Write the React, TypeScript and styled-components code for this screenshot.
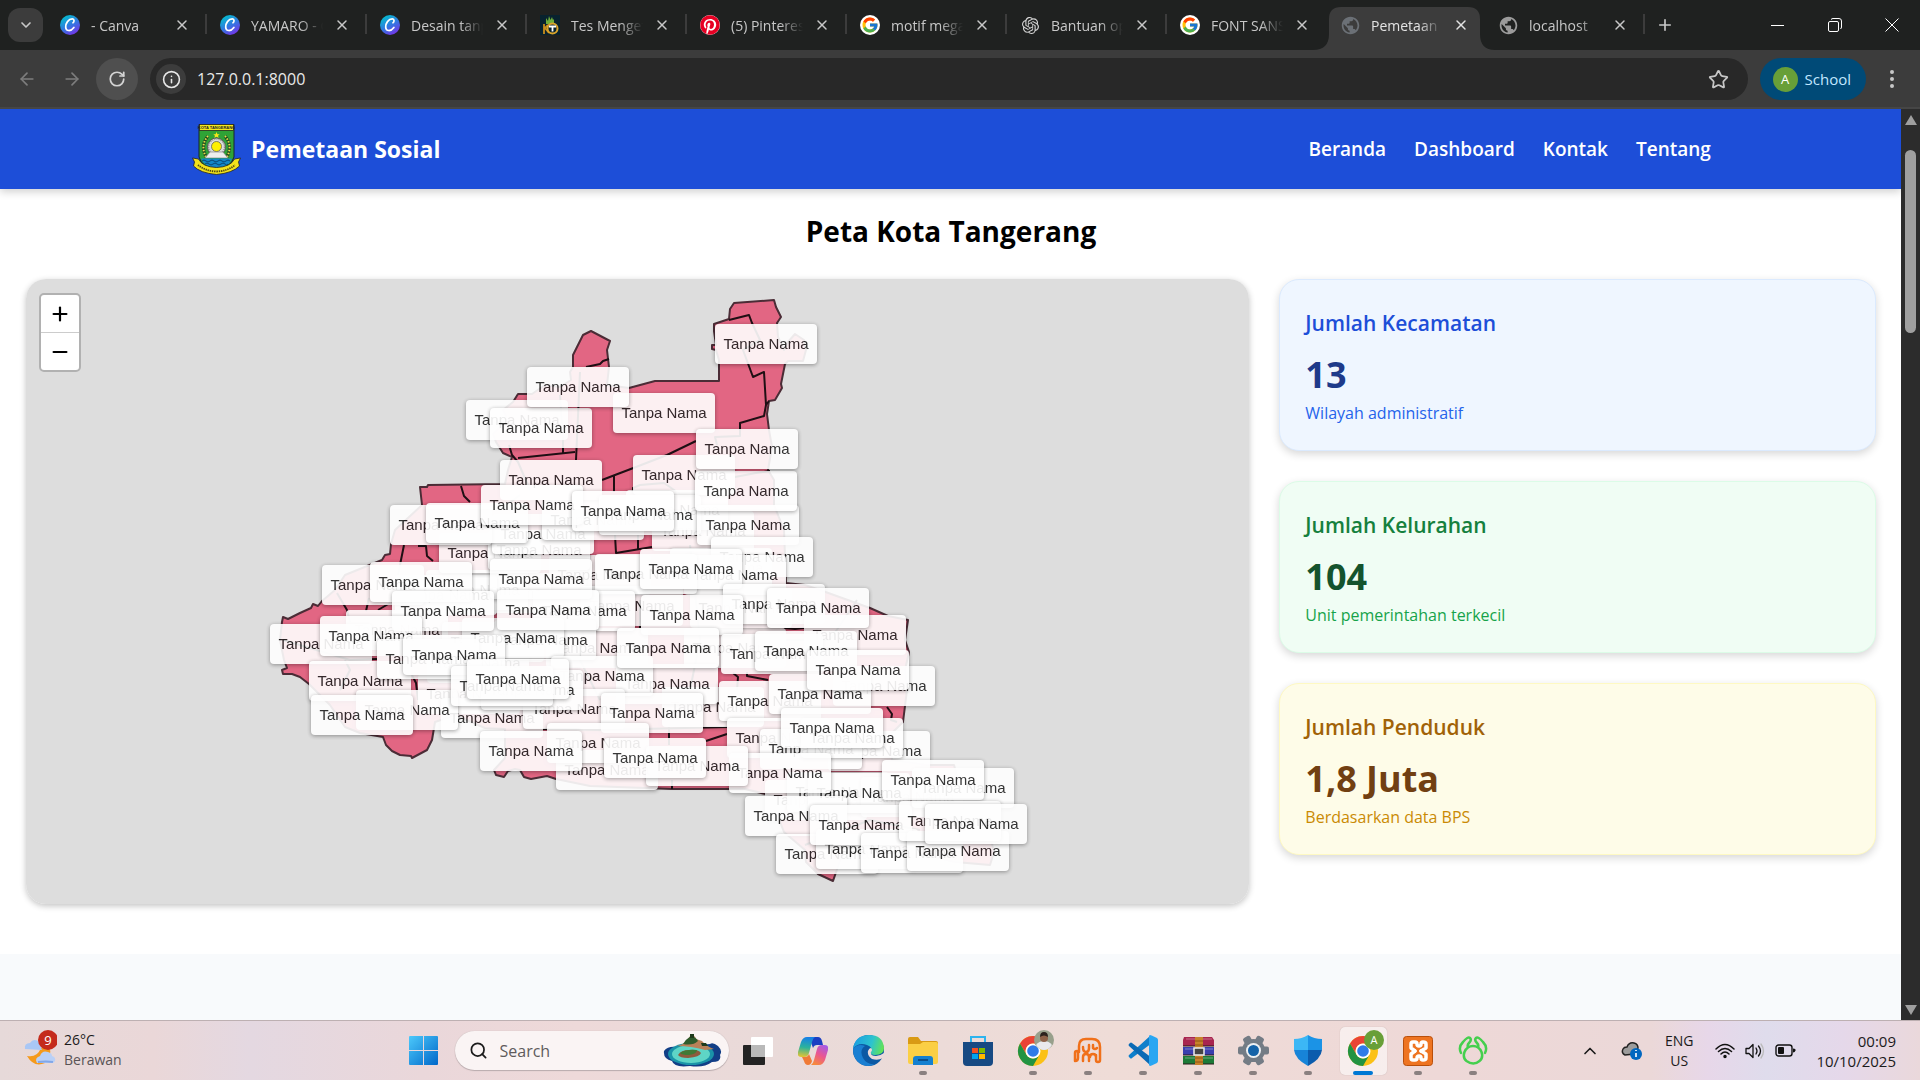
import React from "react";
import styled, { createGlobalStyle, css } from "styled-components";
import {
  ArrowLeft,
  ArrowRight,
  ChevronDown,
  ChevronUp,
  Info,
  Minus,
  MoreVertical,
  Plus,
  RotateCw,
  Search,
  Star,
  X,
} from "lucide-react";
import { FcGoogle } from "react-icons/fc";
import { FaPinterest } from "react-icons/fa";
import { SiOpenai } from "react-icons/si";
import { MdPublic } from "react-icons/md";

const uiFont = `"Open Sans", "Noto Sans", sans-serif`;

const GlobalStyle = createGlobalStyle`
  *, *::before, *::after { box-sizing: border-box; }
  body { margin: 0; font-family: ${uiFont}; overflow: hidden; }
  button { border: 0; padding: 0; margin: 0; background: none; font: inherit; color: inherit; cursor: pointer; }
  input { border: 0; padding: 0; margin: 0; background: none; font: inherit; color: inherit; outline: 0; min-width: 0; }
  a { color: inherit; text-decoration: none; }
  h1, h2, p { margin: 0; }
  svg { display: block; flex: none; }
`;

/* ---------- window ---------- */

const Window = styled.div`
  display: flex;
  flex-direction: column;
  width: 100%;
  height: 100vh;
  overflow: hidden;
`;

const TabStrip = styled.header`
  display: flex;
  height: 50px;
  flex: none;
  padding-left: 8px;
  background: #1f2120;
  color: #c8c8c8;
  font-size: 14px;
`;

const TabSearch = styled.button`
  width: 35px;
  height: 34px;
  margin: 8px 3px 8px 0;
  border-radius: 12px;
  background: #3c3c3c;
  display: grid;
  place-items: center;
`;

const TabItem = styled.div<{ $active?: boolean; $divider?: boolean }>`
  position: relative;
  display: flex;
  align-items: center;
  width: ${(p) => (p.$active ? 158 : 160)}px;
  height: 50px;
  padding: 0 14px;
  gap: 11px;
  ${(p) =>
    p.$divider &&
    css`
      &::after {
        content: "";
        position: absolute;
        right: -1px;
        top: 14px;
        width: 2px;
        height: 20px;
        background: #3c3c3c;
      }
    `}
  ${(p) =>
    p.$active &&
    css`
      color: #e3e3e3;
      z-index: 1;
    `}
`;

const ActiveShape = styled.svg`
  position: absolute;
  left: -13px;
  top: 7px;
  z-index: -1;
`;

const TabTitle = styled.button`
  width: 72px;
  height: 30px;
  overflow: hidden;
  white-space: nowrap;
  text-align: left;
  mask-image: linear-gradient(90deg, #000 68%, transparent 100%);
`;

const Favicon = styled.span`
  width: 20px;
  height: 20px;
  display: grid;
  place-items: center;
  flex: none;
`;

const WhiteDisc = styled(Favicon)`
  border-radius: 50%;
  background: #fff;
`;

const CloseTab = styled.button`
  width: 18px;
  height: 18px;
  margin-left: -1px;
  display: grid;
  place-items: center;
  flex: none;
`;

const NewTab = styled.button`
  width: 42px;
  display: grid;
  place-items: center;
`;

const WindowButtons = styled.div`
  display: flex;
  margin-left: auto;
  color: #fff;
`;

const WindowButton = styled.button`
  width: 57px;
  height: 50px;
  display: grid;
  place-items: center;
`;

const Toolbar = styled.div`
  display: flex;
  align-items: center;
  height: 59px;
  flex: none;
  padding: 1px 16px 0 6px;
  background: #3c3c3c;
  border-bottom: 2px solid #464646;
  color: #c7c7c7;
`;

const ToolButton = styled.button<{ $round?: boolean; $dim?: boolean }>`
  width: 42px;
  height: 42px;
  margin-right: 3px;
  border-radius: 50%;
  display: grid;
  place-items: center;
  color: ${(p) => (p.$dim ? "#7d7d7d" : "#d4d4d4")};
  background: ${(p) => (p.$round ? "#4f4f4f" : "transparent")};
`;

const AddressBar = styled.div`
  display: flex;
  align-items: center;
  flex: 1;
  height: 42px;
  margin-left: 9px;
  padding: 0 19px 0 6px;
  border-radius: 21px;
  background: #282828;
  color: #e8e8e8;
  font-size: 16px;
`;

const SiteInfo = styled.button`
  width: 30px;
  height: 30px;
  border-radius: 50%;
  background: #3c3c3c;
  display: grid;
  place-items: center;
  margin-right: 11px;
`;

const AddressInput = styled.input`
  flex: 1;
`;

const Profile = styled.button`
  display: flex;
  align-items: center;
  gap: 7px;
  height: 42px;
  margin: 0 14px 0 12px;
  padding: 0 15px 0 13px;
  border-radius: 21px;
  background: #004a77;
  color: #c2e7ff;
  font-size: 15px;
`;

const Avatar = styled.span`
  width: 25px;
  height: 25px;
  border-radius: 50%;
  background: #689f38;
  color: #fff;
  font-size: 13px;
  line-height: 25px;
  text-align: center;
`;

/* ---------- page ---------- */

const Viewport = styled.div`
  display: flex;
  flex: 1;
  min-height: 0;
`;

const Page = styled.div`
  flex: 1;
  min-width: 0;
  overflow: hidden;
  background: #f8fafc;
`;

const SiteHeader = styled.header`
  position: relative;
  height: 80px;
  background: #1d4ed8;
  color: #fff;
  box-shadow: 0 3px 8px rgba(0, 0, 0, 0.18);
`;

const HeaderInner = styled.div`
  display: flex;
  align-items: center;
  justify-content: space-between;
  width: 80%;
  height: 100%;
  margin: 0 auto;
  padding-left: 2px;
`;

const Brand = styled.a`
  display: flex;
  align-items: center;
  gap: 10px;
  font-size: 23px;
  font-weight: 700;
`;

const Nav = styled.nav`
  display: flex;
  gap: 28px;
  font-size: 19px;
  font-weight: 600;
`;

const Section = styled.main`
  background: #fff;
  padding: 20px 25px 50px 26px;
`;

const Heading = styled.h1`
  font-size: 28px;
  line-height: 45px;
  font-weight: 700;
  text-align: center;
  color: #000;
  margin-bottom: 25px;
`;

const Columns = styled.div`
  display: grid;
  grid-template-columns: repeat(3, 1fr);
  gap: 30px;
`;

const MapPanel = styled.section`
  position: relative;
  height: 625px;
  overflow: hidden;
  border-radius: 20px;
  background: #ddd;
`;

const MapFrame = styled.div`
  grid-column: span 2;
  border-radius: 20px;
  box-shadow: 0 2px 6px rgba(0, 0, 0, 0.24);
`;

const Regions = styled.svg`
  position: absolute;
  left: 0;
  top: 0;
`;

const Tooltip = styled.span<{ $x: number; $y: number }>`
  position: absolute;
  left: ${(p) => p.$x}px;
  top: ${(p) => p.$y}px;
  width: 102px;
  height: 40px;
  border-radius: 4px;
  background: #fff;
  box-shadow: 0 1px 4px rgba(0, 0, 0, 0.4);
  color: #222;
  font: 15px/40px "Liberation Sans", Arial, sans-serif;
  text-align: center;
  white-space: nowrap;
  opacity: 0.9;
`;

const ZoomControl = styled.div`
  position: absolute;
  left: 13px;
  top: 14px;
  width: 42px;
  border: 2px solid #b1b1b1;
  border-radius: 5px;
  background: #fff;
  overflow: hidden;
`;

const ZoomButton = styled.button`
  width: 100%;
  height: 37px;
  display: grid;
  place-items: center;
  color: #000;
  & + & {
    height: 38px;
    border-top: 1px solid #ccc;
  }
`;

const Stats = styled.aside`
  display: flex;
  flex-direction: column;
  gap: 30px;
`;

type Tone = { bg: string; edge: string; title: string; value: string; note: string };

const StatCard = styled.article<{ $tone: Tone }>`
  padding: 25px 25px 23px;
  border: 1px solid ${(p) => p.$tone.edge};
  border-radius: 20px;
  background: ${(p) => p.$tone.bg};
  color: ${(p) => p.$tone.note};
  box-shadow: 0 3px 8px rgba(0, 0, 0, 0.16);
`;

const StatTitle = styled.h2<{ $color: string }>`
  font-size: 21px;
  line-height: 37px;
  font-weight: 600;
  color: ${(p) => p.$color};
`;

const StatValue = styled.p<{ $color: string }>`
  margin-top: 8px;
  font-size: 36px;
  line-height: 50px;
  font-weight: 700;
  color: ${(p) => p.$color};
`;

const StatNote = styled.p`
  font-size: 16px;
  line-height: 27px;
`;

const ScrollTrack = styled.div`
  display: flex;
  flex-direction: column;
  align-items: center;
  width: 19px;
  flex: none;
  padding: 6px 0 5px;
  background: #2c2c2c;
`;

const ScrollThumb = styled.div`
  width: 11px;
  height: 183px;
  margin: 25px 0 auto;
  border-radius: 6px;
  background: #9f9f9f;
`;

/* ---------- taskbar ---------- */

const Taskbar = styled.footer`
  display: grid;
  grid-template-columns: 1fr auto 1fr;
  align-items: center;
  height: 60px;
  flex: none;
  border-top: 1px solid #bdb0b2;
  background: linear-gradient(90deg, #e6d9d9 0%, #ead7d8 8%, #e4d8e1 13%, #ead7da 22%, #eed9d9 30%, #e9dad9 40%, #efdcd7 58%, #eed8d7 75%, #ebd8d8 86%, #e7d7e9 89%, #dfdcec 92%, #e5d8ea 96%, #ead8db 100%);
  color: #1b1b1b;
  font-size: 14px;
`;

const Weather = styled.button`
  display: flex;
  gap: 7px;
  padding-left: 24px;
  text-align: left;
  line-height: 20px;
  color: #5a5456;
`;

const Temperature = styled.span`
  display: block;
  color: #1b1b1b;
`;

const AppRow = styled.div`
  display: flex;
  align-items: center;
  padding-right: 24px;
`;

const AppButton = styled.button<{ $running?: boolean; $active?: boolean }>`
  position: relative;
  width: 47px;
  height: 48px;
  margin: 0 4px;
  display: grid;
  place-items: center;
  border-radius: 5px;
  ${(p) => p.$active && "background: rgba(255,255,255,.55); box-shadow: 0 0 1px rgba(0,0,0,.25);"}
  ${(p) =>
    p.$running &&
    css`
      &::after {
        content: "";
        position: absolute;
        bottom: 0;
        left: 50%;
        width: ${p.$active ? 20 : 8}px;
        height: 4px;
        transform: translateX(-50%);
        border-radius: 2px;
        background: ${p.$active ? "#0078d4" : "#8a8080"};
      }
    `}
`;

const SearchBox = styled.label`
  display: flex;
  align-items: center;
  gap: 12px;
  width: 274px;
  height: 39px;
  margin: 0 2px 0 4px;
  padding: 0 7px 0 14px;
  border-radius: 20px;
  background: #faf4f4;
  box-shadow: 0 1px 1px #b9abad, 0 0 1px #b9abad;
  font-size: 16px;
  & input {
    flex: 1;
  }
  & input::placeholder {
    color: #5f5b5c;
    opacity: 1;
  }
`;

const Tray = styled.div`
  display: flex;
  align-items: center;
  justify-content: flex-end;
  padding-right: 24px;
`;

const TrayButton = styled.button<{ $gap: number }>`
  margin-right: ${(p) => p.$gap}px;
  line-height: 20px;
  text-align: center;
`;

const Clock = styled.time`
  font-size: 15px;
  text-align: right;
  line-height: 20px;
`;

/* ---------- drawings ---------- */

const CanvaIcon = () => (
  <svg width="20" height="20" viewBox="0 0 20 20">
    <defs>
      <linearGradient id="canva" x1="0.2" y1="0" x2="0.8" y2="1">
        <stop offset="0" stopColor="#00c4cc" />
        <stop offset="0.5" stopColor="#2f7ae0" />
        <stop offset="1" stopColor="#7d2ae8" />
      </linearGradient>
    </defs>
    <circle cx="10" cy="10" r="10" fill="url(#canva)" />
    <path d="M13 7.800c1.400-.8 1.500-3.800-.6-3.900C8.500 3.800 5.400 8.500 5.700 12.200c.3 4.300 5 4.500 8.200.2" fill="none" stroke="#fff" strokeWidth="1.700" strokeLinecap="round" />
  </svg>
);

const SchoolIcon = () => (
  <svg width="20" height="20" viewBox="0 0 20 20">
    <rect width="20" height="20" fill="#08222e" />
    <path d="M6 9 6 3l2 3 1-5 1.500 4 1.500-3 1 3 1-1v5z" fill="#6fae3a" />
    <path d="M4 9v10M4 14l4-4M5 13l4 5" stroke="#c98d1c" strokeWidth="1.800" />
    <circle cx="12.500" cy="13.500" r="5" fill="none" stroke="#d9a32a" strokeWidth="2" />
    <path d="M9 11.500h7M12.500 11.500v5" stroke="#fff" strokeWidth="1.800" />
  </svg>
);

const CrestIcon = () => (
  <svg width="49" height="51" viewBox="0 0 49 51">
    <path d="M7 .5h35V33q-3 11-17.500 12Q10 44 7 33z" fill="#2fa336" stroke="#17242b" />
    <rect x="7.500" y=".5" width="34" height="6" fill="#f6e71d" stroke="#222" strokeWidth=".8" />
    <text x="24.500" y="5.200" fontSize="4" fontWeight="700" textAnchor="middle" fontFamily="Liberation Sans" fill="#222">KOTA TANGERANG</text>
    <path d="m24.500 8 1 2.200h2.200l-1.700 1.500.7 2.300-2.200-1.300-2.200 1.300.7-2.300-1.700-1.500h2.200z" fill="#f6e71d" />
    <path d="M16 12q-8 9-2 21M33 12q8 9 2 21" fill="none" stroke="#1d4d20" strokeWidth="3" />
    <path d="M16 12q-8 9-2 21M33 12q8 9 2 21" fill="none" stroke="#e8dc4a" strokeWidth="2" strokeDasharray="1.500 1.500" />
    <circle cx="24.500" cy="23" r="9" fill="#dcdcdc" stroke="#555" strokeWidth="1" />
    <circle cx="24.500" cy="23" r="8" fill="none" stroke="#888" strokeWidth="1.500" strokeDasharray="1 1.200" />
    <circle cx="24.500" cy="22.500" r="5" fill="#fff000" stroke="#665" strokeWidth=".8" />
    <path d="m13 34 5-6h13l5 6z" fill="#eee" stroke="#777" strokeWidth=".6" />
    <path d="M9 34.500h31q-3 9-15.500 10Q12 43 9 34.500z" fill="#1387c8" />
    <path d="M10 37q2-2 4 0t4 0 4 0 4 0 4 0 4 0 4 0M13 40q2-2 4 0t4 0 4 0 4 0 4 0 3 0" fill="none" stroke="#0a3f6b" strokeWidth=".9" />
    <path d="m.5 34 6 1q4 8 18 8.500 14-.5 18-8.500l6-1-2 4 1 4q-7 7-23 8.500Q8 49 1.500 42l1-4z" fill="#f2e21b" stroke="#222" strokeWidth=".8" />
    <path d="M6 41q7 6 18.500 6.500Q36 47 43 41" fill="none" stroke="#514a10" strokeWidth="1.800" strokeDasharray="1.400 .8" />
  </svg>
);

const WeatherIcon = () => (
  <svg width="33" height="42" viewBox="0 0 33 42">
    <path d="M3 26q10 2 14-8l8-2q4 10-4 17-11 5-18-7z" fill="#f59a1c" />
    <path d="M1 19q-1-6 5-6 3-5 8-2l4 9z" fill="#a9c7f5" />
    <path d="M13 33q-3-5 3-7 2-6 8-4 4 1 4 4 4 1 3 5-1 2-3 2z" fill="#b9d0f7" />
    <path d="M14 32q8-1 15 0" stroke="#82a7e8" strokeWidth="2" fill="none" />
    <circle cx="24" cy="10" r="10" fill="#c42b1c" />
    <text x="24" y="15" fontSize="13" fill="#fff" textAnchor="middle" fontFamily="Open Sans">9</text>
  </svg>
);

const StartIcon = () => (
  <svg width="29" height="29" viewBox="0 0 29 29">
    <defs>
      <linearGradient id="start" x1="0" y1="0" x2="1" y2="1">
        <stop offset="0" stopColor="#4cc9fb" />
        <stop offset="1" stopColor="#0067c9" />
      </linearGradient>
    </defs>
    <path d="M0 1q0-1 1-1h13v14H0zM15 0h13q1 0 1 1v13H15zM0 15h14v14H1q-1 0-1-1zM15 15h14v13q0 1-1 1H15z" fill="url(#start)" />
  </svg>
);

const IslandIcon = () => (
  <svg width="60" height="36" viewBox="0 -1 60 36">
    <path d="M2 17q4-5 12-4l34-3q3-2 8 2 5 5 2 9 2 7-8 7-8 6-22 4-16 2-18-5-9-2-8-10z" fill="#123e86" />
    <ellipse cx="29" cy="20" rx="23" ry="11" fill="#1a93a8" />
    <ellipse cx="29" cy="20" rx="19" ry="9" fill="#5ed5c6" />
    <path d="M15 12q8-2 10-6l4-5q4 0 5 4l6 2q4 5 12 8l-9 1q-14-4-28-4z" fill="#b98058" />
    <path d="M21 10q3-5 8-8 5 1 7 5-5 5-15 3z" fill="#2f5b2c" />
    <path d="M28 0h4v4h-4zM39 9h5l2 3h-6z" fill="#1f3a1c" />
    <path d="M16 21q3-5 11-5 9-1 12 3-1 4-13 5-8 0-10-3z" fill="#8d5b3d" />
    <path d="M18 19q6-4 17-3 0 4-8 5-7 0-9-2z" fill="#3f7a35" />
  </svg>
);

const TaskViewIcon = () => (
  <svg width="30" height="30" viewBox="0 0 30 30">
    <rect x="0" y="9" width="22" height="20" rx="1" fill="#232323" />
    <rect x="8" y="1" width="22" height="20" rx="1" fill="#fff" />
    <rect x="8" y="9" width="14" height="12" fill="#b9b9b9" />
  </svg>
);

const CopilotIcon = () => (
  <svg width="30" height="30" viewBox="0 0 30 30">
    <defs>
      <linearGradient id="cop1" x1="0.3" y1="0" x2="0.2" y2="1">
        <stop offset="0" stopColor="#1780e6" />
        <stop offset="0.5" stopColor="#2bb39b" />
        <stop offset="1" stopColor="#e9c52f" />
      </linearGradient>
      <linearGradient id="cop2" x1="0.8" y1="0" x2="0.3" y2="1">
        <stop offset="0" stopColor="#a45be8" />
        <stop offset="0.5" stopColor="#ea5692" />
        <stop offset="1" stopColor="#f7893b" />
      </linearGradient>
    </defs>
    <path d="M11 1h9q3 0 4 4l1 4h-6q-3 0-4 3z" fill="#1b3fc2" />
    <path d="M9 1h8q-2 1-3 5l-3 11q-1 4-5 4H3q-4 0-3-5L3 6q2-5 6-5z" fill="url(#cop1)" />
    <path d="M21 29h-8q2-1 3-5l3-11q1-4 5-4h3q4 0 3 5l-3 10q-2 5-6 5z" fill="url(#cop2)" />
    <path d="M4 21h3q3 0 4-3l3 7q-1 4-4 4-3 0-4-4z" fill="#f07a36" />
  </svg>
);

const EdgeIcon = () => (
  <svg width="31" height="31" viewBox="0 0 31 31">
    <defs>
      <linearGradient id="edge1" x1="0" y1="0.3" x2="1" y2="0.5">
        <stop offset="0" stopColor="#1b9de2" />
        <stop offset="0.6" stopColor="#2dc3ce" />
        <stop offset="1" stopColor="#62e356" />
      </linearGradient>
    </defs>
    <circle cx="15.500" cy="15.500" r="15.500" fill="#0c59a4" />
    <path d="M0 14Q2 0 16 0t15 13q0 7-9 7-5 0-4-3 2-5-4-7Q5 7 0 14z" fill="url(#edge1)" />
    <path d="M0 14q5-6 12-3-6 4-2 12 4 7 12 6Q12 34 4 26 0 21 0 14z" fill="#1a7fd2" />
    <path d="M18 17q-1 4 5 4 4 0 8-3l1 4-2 1q-5 3-11 1-5-3-4-8 1-3 3-3 2 2 0 4z" fill="#ecdad9" />
  </svg>
);

const FolderIcon = () => (
  <svg width="30" height="28" viewBox="0 0 30 28">
    <path d="M0 2q0-2 2-2h8l3 4h15q2 0 2 2v8H0z" fill="#d99a14" />
    <path d="M0 7h12l3-2h13q2 0 2 2v18q0 2-2 2H2q-2 0-2-2z" fill="#fbcf45" />
    <path d="M5 28v-6q0-3 3-3h14q3 0 3 3v6z" fill="#1580d0" />
    <path d="M10 23h10" stroke="#0b4f8c" strokeWidth="2" />
  </svg>
);

const StoreIcon = () => (
  <svg width="30" height="30" viewBox="0 0 30 30">
    <path d="M8 7V1h14v6" fill="none" stroke="#2eb4ee" strokeWidth="2" />
    <path d="M0 6h30v20q0 4-4 4H4q-4 0-4-4z" fill="#174a83" />
    <path d="M9 12h6v5H9z" fill="#f25022" />
    <path d="M16 12h6v5h-6z" fill="#7fba00" />
    <path d="M9 18h6v5H9z" fill="#00a4ef" />
    <path d="M16 18h6v5h-6z" fill="#ffb900" />
  </svg>
);

const ChromeIcon = ({ badge }: { badge: "photo" | "letter" }) => (
  <svg width="38" height="38" viewBox="-3 3 38 38" overflow="visible">
    <circle cx="16" cy="22" r="15" fill="#fbc116" />
    <path d="M3 14.500A15 15 0 0 1 29 14.500H16a7.500 7.500 0 0 0-6.500 11z" fill="#ea4335" />
    <path d="M3 14.500A15 15 0 0 0 16 37l6.500-11.300a7.500 7.500 0 0 1-13 0z" fill="#229342" />
    <circle cx="16" cy="22" r="7.500" fill="#fff" />
    <circle cx="16" cy="22" r="5.800" fill="#2f7be8" />
    {badge === "letter" ? (
      <>
        <circle cx="27" cy="11" r="10" fill="#689f38" />
        <text x="27" y="15" fontSize="11" fill="#fff" textAnchor="middle" fontFamily="Open Sans">A</text>
      </>
    ) : (
      <>
        <circle cx="27" cy="11" r="10" fill="#98a08c" />
        <path d="M19 16q3-4 8-4t8 4q-3 5-8 5t-8-5z" fill="#e9e9ec" />
        <circle cx="27" cy="9" r="4" fill="#8d6148" />
        <path d="M23 8q0-5 4-5t4 5q-4-3-8 0z" fill="#2b211d" />
      </>
    )}
  </svg>
);

const ElephantIcon = () => (
  <svg width="30" height="28" viewBox="0 0 30 28" fill="none" stroke="#f0701a" strokeWidth="2.500" strokeLinecap="round" strokeLinejoin="round">
    <path d="M6 15V9q0-7 7-7h6q8 0 8 8v13q0 2-2 2t-2-2v-5M2 24q3 0 3-3v-5M2 24v-8q0-2 2-2M10 10q0 5 3 5t3-4V8M10 24v-4q0-3 3-3t3 3v4M17 20q0-3 3-3t3 3M20 8v3q2 2 4 0" />
  </svg>
);

const VsCodeIcon = () => (
  <svg width="31" height="31" viewBox="0 0 31 31">
    <path d="m1 20 21-19 2 7L4 23q-1 1-2 0l-1-1q-1-1 0-2z" fill="#0f7fcb" />
    <path d="m1 11 21 19 2-7L4 8Q3 7 2 8L1 9q-1 1 0 2z" fill="#0a6ab5" />
    <path d="M22 0q1 0 7 3 1 1 1 2v21q0 1-1 2-6 3-7 3-1 0-1-2V2q0-2 1-2z" fill="#29a6f2" />
  </svg>
);

const WinRarIcon = () => (
  <svg width="31" height="28" viewBox="0 0 31 28">
    <path d="M1 0h28l2 3v6H0V3z" fill="#a8254f" />
    <path d="M0 10h31v8H0z" fill="#3a3fae" />
    <path d="M0 19h31v8H0z" fill="#1d7a37" />
    <path d="M3 2h26M2 12h28M2 21h28" stroke="#fff" strokeOpacity=".35" strokeWidth="1" />
    <path d="M0 9h31M0 18h31M0 27h31" stroke="#2a1a1a" strokeWidth="1" />
    <rect x="12" width="8" height="28" fill="#c7822a" />
    <path d="M12 4h8M12 8h8M12 21h8M12 25h8" stroke="#8d5414" />
    <rect x="11" y="11" width="10" height="7" fill="#444" stroke="#eee" strokeWidth="1.500" />
  </svg>
);

const GearIcon = () => (
  <svg width="31" height="31" viewBox="0 0 31 31">
    <g fill="#747c85">
      <circle cx="15.500" cy="15.500" r="11.500" />
      {[0, 60, 120, 180, 240, 300].map((a) => (
        <rect key={a} x="11.500" y="0" width="8" height="9" rx="2" transform={`rotate(${a + 30} 15.500 15.500)`} />
      ))}
    </g>
    <circle cx="15.500" cy="15.500" r="7.500" fill="#eef0f2" />
    <circle cx="15.500" cy="15.500" r="5.500" fill="#1463a8" />
  </svg>
);

const ShieldIcon = () => (
  <svg width="28" height="31" viewBox="0 0 28 31">
    <path d="M14 0q6 4 14 4v11H14z" fill="#1b93e6" />
    <path d="M14 0Q8 4 0 4v11h14z" fill="#3cb7f5" />
    <path d="M0 15h14v16Q1 24 0 15z" fill="#1784d8" />
    <path d="M28 15H14v16q13-7 14-16z" fill="#0b5cad" />
  </svg>
);

const XamppIcon = () => (
  <svg width="30" height="30" viewBox="0 0 30 30">
    <rect x=".5" y=".5" width="29" height="29" rx="3" fill="#ee7421" stroke="#b94f0b" />
    <g fill="none" stroke="#fff" strokeWidth="3.500" strokeLinecap="round" strokeLinejoin="round">
      <path d="M12 15 8 12V8q0-2 2-2h2q2 0 2 2t2 2 2-2 2-2q3 0 3 2v4l-5 3" />
      <path d="m12 15-4 3v4q0 2 2 2h2q2 0 2-2t2-2 2 2 2 2q3 0 3-2v-4l-5-3" />
    </g>
  </svg>
);

const NavicatIcon = () => (
  <svg width="30" height="30" viewBox="0 0 30 30" fill="none" stroke="#45cf4e" strokeWidth="2.500" strokeLinecap="round" strokeLinejoin="round">
    <path d="M15 10q6 0 8.500 6 2 6-2 9-6 5-13 0-4-3-2-9Q9 10 15 10z" />
    <path d="M3 17Q0 11 5 6q5-6 7-4t-1 5q-2 2-1 4M27 17q3-6-2-11-5-6-7-4t1 5q2 2 1 4" />
  </svg>
);

const CloudInfoIcon = () => (
  <svg width="22" height="20" viewBox="0 0 22 20">
    <path d="M4 14q-4-2-2-6 1-2 4-2 2-5 7-4 4 1 4 5l-4 6z" fill="#9c9c9c" stroke="#222" strokeWidth="1.500" />
    <circle cx="15" cy="13" r="6" fill="#0067c0" />
    <path d="M15 12v4M15 9v1" stroke="#fff" strokeWidth="1.600" />
  </svg>
);

const WifiIcon = () => (
  <svg width="20" height="16" viewBox="0 0 20 16" fill="none" stroke="#111" strokeWidth="1.500" strokeLinecap="round">
    <path d="M1 6q9-9 18 0M3.500 8.500q6.500-6 13 0M6 11q4-4 8 0" />
    <circle cx="10" cy="13.500" r="1" fill="#111" />
  </svg>
);

const SpeakerIcon = () => (
  <svg width="20" height="16" viewBox="0 0 20 16" fill="none" stroke="#111" strokeWidth="1.300" strokeLinecap="round" strokeLinejoin="round">
    <path d="M1 5.500h3l4-4v13l-4-4H1zM11 5q2 3 0 6M13.500 3q4 5 0 10" />
    <path d="M16 1q5 7 0 14" stroke="#bbb" />
  </svg>
);

const BatteryIcon = () => (
  <svg width="21" height="14" viewBox="0 0 21 14">
    <rect x="1" y="1" width="16" height="11" rx="2.500" fill="none" stroke="#111" strokeWidth="1.400" />
    <rect x="3" y="3" width="6" height="7" rx="1" fill="#111" />
    <path d="M18 4.500q3 0 2.500 2t-2.500 2z" fill="#111" />
  </svg>
);

/* ---------- data ---------- */

const canvaTabs = ["- Canva", "YAMARO - Canva", "Desain tanpa judul"];

const disc = (
  <WhiteDisc>
    <FcGoogle size={18} />
  </WhiteDisc>
);

const tabs = [
  ...canvaTabs.map((title) => ({ title, icon: <CanvaIcon /> })),
  { title: "Tes Mengetik", icon: <SchoolIcon /> },
  { title: "(5) Pinterest", icon: <WhiteDisc><FaPinterest size={20} color="#e60023" /></WhiteDisc> },
  { title: "motif megamendung", icon: disc },
  { title: "Bantuan operasi", icon: <SiOpenai size={17} color="#d6d6d6" /> },
  { title: "FONT SANS", icon: disc },
  { title: "Pemetaan Sosial", icon: <MdPublic size={21} color="#6b7076" />, active: true },
  { title: "localhost", icon: <MdPublic size={21} color="#9b9b9b" /> },
];

const ORIGIN = { x: 26, y: 279 };
const tooltips: [number, number][] = [
  [652, 511], [626, 490], [670, 548], [549, 555], [449, 573], [426, 570], [395, 575], [346, 610],
  [442, 622], [427, 643], [546, 628], [684, 628], [690, 588], [581, 586], [418, 674],
  [765, 780], [787, 772], [861, 777], [439, 533], [488, 530], [492, 514], [390, 505],
  [426, 503], [542, 500], [613, 393], [466, 400], [490, 408], [527, 367], [500, 460],
  [481, 485], [633, 455], [599, 495], [697, 505], [695, 471], [696, 429], [572, 491],
  [715, 324], [711, 537], [684, 555], [595, 554], [640, 549], [533, 591], [490, 559],
  [322, 565], [370, 562], [494, 620], [462, 618], [497, 590], [392, 591],
  [723, 584], [804, 615], [767, 588], [641, 595], [721, 634], [755, 631],
  [833, 666], [662, 687], [616, 664], [551, 656], [617, 628], [719, 681], [769, 674], [807, 650],
  [270, 624], [320, 616], [309, 661], [377, 639], [403, 635],
  [441, 698], [523, 689], [356, 690], [311, 695], [481, 670], [451, 666], [467, 659],
  [601, 693], [556, 750], [547, 723], [480, 731],
  [828, 731], [727, 718], [760, 729], [801, 718], [781, 708],
  [808, 773], [729, 753], [646, 746], [604, 738],
  [745, 796], [776, 834], [816, 829], [810, 805], [861, 833], [907, 831],
  [912, 768], [882, 760], [899, 801], [925, 804],
];

const outline =
  "M734 303 774 300 776 307 781 317 777 323 778 337 784 350 788 342 795 334 804 340 806 350 803 361 788 361 785 364 781 384 782 388 775 400 769 401 767 414 769 430 772 447 768 470 774 480 774 505 784 530 786 583 805 585 820 590 870 608 888 616 908 620 905 640 909 652 905 670 907 690 903 722 890 735 892 760 927 765 954 765 958 780 930 790 960 830 991 840 994 852 990 865 955 862 905 850 870 840 845 846 833 881 818 874 806 862 805 850 784 832 780 822 790 800 745 789 672 789 590 786 556 779 547 776 531 779 524 777 520 770 515 769 508 771 504 777 496 775 494 770 505 758 505 729 485 728 455 715 435 722 432 740 427 750 412 758 411 756 400 755 392 751 386 745 383 737 360 733 345 727 330 705 309 684 300 677 292 674 283 674 282 670 287 668 284 660 280 640 282 622 283 617 288 619 300 613 311 608 313 604 318 606 322 601 335 590 345 575 382 560 385 555 390 554 391 544 395 530 422 505 420 487 427 487 428 485 505 484 508 470 512 457 503 453 496 442 493 434 508 420 503 410 513 402 518 394 532 394 545 385 560 387 571 380 570 372 573 367 573 355 583 335 591 331 610 341 607 350 609 367 607 385 629 388 655 381 719 381 719 360 716 350 712 349 712 345 716 345 714 331 714 324 729 319 730 309Z";

const borders =
  "M729 320 749 315 752 323 760 340 743 350 753 377 764 372 766 405 764 416 740 423 740 436 715 437 717 445M769 401 766 405M696 441 667 455 636 467 615 475 602 480M614 475 614 492M633 492 633 488 640 485 664 483 680 494M770 471 756 473 735 477M580 372 576 460M586 367 600 364 603 361 609 359M563 453 563 440 560 395M518 458 575 452M509 445 512 455 518 462 530 490M500 510 520 495M461 486 464 496 470 502M404 545 401 560 395 590M418 546 426 546 427 556 433 561M615 535 616 553 652 547M638 535 638 549M337 593 347 610 350 622M366 611 369 598M378 610 390 603M283 640 350 660 377 659M412 675 416 683 418 700M733 673 738 677 737 690M747 672 747 676 768 680M784 628 795 629 804 628M887 707 892 714 891 720 897 722M543 729 600 730 727 727M669 727 669 745M706 741 727 734M672 780 672 789M345 660 350 670 340 690M640 600 640 628M805 845 870 820 920 830M857 600 830 640 780 640M590 555 580 660 600 700M690 545 700 640 690 690";

const stats: { title: string; value: string; note: string; tone: Tone }[] = [
  {
    title: "Jumlah Kecamatan",
    value: "13",
    note: "Wilayah administratif",
    tone: { bg: "#eff6ff", edge: "#dbeafe", title: "#1d4ed8", value: "#1e3a8a", note: "#2563eb" },
  },
  {
    title: "Jumlah Kelurahan",
    value: "104",
    note: "Unit pemerintahan terkecil",
    tone: { bg: "#f0fdf4", edge: "#dcfce7", title: "#15803d", value: "#14532d", note: "#16a34a" },
  },
  {
    title: "Jumlah Penduduk",
    value: "1,8 Juta",
    note: "Berdasarkan data BPS",
    tone: { bg: "#fefce8", edge: "#fef9c3", title: "#a16207", value: "#713f12", note: "#ca8a04" },
  },
];

const apps = [
  { name: "Task view", icon: <TaskViewIcon /> },
  { name: "Copilot", icon: <CopilotIcon /> },
  { name: "Edge", icon: <EdgeIcon /> },
  { name: "File Explorer", icon: <FolderIcon />, running: true },
  { name: "Store", icon: <StoreIcon /> },
  { name: "Chrome", icon: <ChromeIcon badge="photo" />, running: true },
  { name: "Database", icon: <ElephantIcon />, running: true },
  { name: "VS Code", icon: <VsCodeIcon />, running: true },
  { name: "WinRAR", icon: <WinRarIcon />, running: true },
  { name: "Settings", icon: <GearIcon />, running: true },
  { name: "Security", icon: <ShieldIcon />, running: true },
  { name: "Chrome, School", icon: <ChromeIcon badge="letter" />, running: true, active: true },
  { name: "XAMPP", icon: <XamppIcon />, running: true },
  { name: "Navicat", icon: <NavicatIcon />, running: true },
];

export default function App() {
  return (
    <Window>
      <GlobalStyle />
      <TabStrip>
        <TabSearch aria-label="Search tabs">
          <ChevronDown size={16} strokeWidth={2.5} />
        </TabSearch>
        {tabs.map((tab, i) => (
          <TabItem key={tab.title} $active={tab.active} $divider={i < 7 || i === 9}>
            {tab.active && (
              <ActiveShape width="182" height="43" viewBox="0 0 182 43">
                <path d="M0 43q16 0 16-16V12Q16 0 28 0h127q12 0 12 12v15q0 16 15 16z" fill="#3c3c3c" />
              </ActiveShape>
            )}
            <Favicon>{tab.icon}</Favicon>
            <TabTitle>{tab.title}</TabTitle>
            <CloseTab aria-label="Close tab">
              <X size={16} strokeWidth={2.2} />
            </CloseTab>
          </TabItem>
        ))}
        <NewTab aria-label="New tab">
          <Plus size={18} strokeWidth={2.2} />
        </NewTab>
        <WindowButtons>
          <WindowButton aria-label="Minimize">
            <svg width="13" height="13"><path d="M0 6.500h13" stroke="#fff" /></svg>
          </WindowButton>
          <WindowButton aria-label="Restore">
            <svg width="14" height="14" fill="none" stroke="#fff">
              <rect x=".5" y="3.500" width="10" height="10" rx="1.500" />
              <path d="M3 1.500Q4 .5 5 .5h6q2.500 0 2.500 2.500v6q0 1-1 2" />
            </svg>
          </WindowButton>
          <WindowButton aria-label="Close">
            <svg width="14" height="14"><path d="m.5.5 13 13m0-13-13 13" stroke="#fff" /></svg>
          </WindowButton>
        </WindowButtons>
      </TabStrip>

      <Toolbar>
        <ToolButton $dim aria-label="Back"><ArrowLeft size={20} /></ToolButton>
        <ToolButton $dim aria-label="Forward"><ArrowRight size={20} /></ToolButton>
        <ToolButton $round aria-label="Reload"><RotateCw size={18} strokeWidth={2.3} /></ToolButton>
        <AddressBar>
          <SiteInfo aria-label="Site information"><Info size={19} /></SiteInfo>
          <AddressInput aria-label="Address" defaultValue="127.0.0.1:8000" />
          <button aria-label="Bookmark"><Star size={21} color="#c7c7c7" /></button>
        </AddressBar>
        <Profile>
          <Avatar>A</Avatar>
          School
        </Profile>
        <button aria-label="Menu"><MoreVertical size={24} /></button>
      </Toolbar>

      <Viewport>
        <Page>
          <SiteHeader>
            <HeaderInner>
              <Brand href="#">
                <CrestIcon />
                Pemetaan Sosial
              </Brand>
              <Nav>
                <a href="#beranda">Beranda</a>
                <a href="#dashboard">Dashboard</a>
                <a href="#kontak">Kontak</a>
                <a href="#tentang">Tentang</a>
              </Nav>
            </HeaderInner>
          </SiteHeader>
          <Section>
            <Heading>Peta Kota Tangerang</Heading>
            <Columns>
              <MapFrame>
                <MapPanel>
                  <Regions width="1224" height="625" viewBox={`${ORIGIN.x} ${ORIGIN.y} 1224 625`}>
                    <path d={outline} fill="#e26683" stroke="#4b2c36" strokeWidth="2" strokeLinejoin="round" />
                    <path d={borders} fill="none" stroke="#1f0f14" strokeWidth="2" strokeLinejoin="round" />
                  </Regions>
                  {tooltips.map(([x, y]) => (
                    <Tooltip key={`${x}-${y}`} $x={x - ORIGIN.x} $y={y - ORIGIN.y}>
                      Tanpa Nama
                    </Tooltip>
                  ))}
                  <ZoomControl>
                    <ZoomButton aria-label="Zoom in"><Plus size={22} strokeWidth={2.4} /></ZoomButton>
                    <ZoomButton aria-label="Zoom out"><Minus size={22} strokeWidth={2.4} /></ZoomButton>
                  </ZoomControl>
                </MapPanel>
              </MapFrame>
              <Stats>
                {stats.map((s) => (
                  <StatCard key={s.title} $tone={s.tone}>
                    <StatTitle $color={s.tone.title}>{s.title}</StatTitle>
                    <StatValue $color={s.tone.value}>{s.value}</StatValue>
                    <StatNote>{s.note}</StatNote>
                  </StatCard>
                ))}
              </Stats>
            </Columns>
          </Section>
        </Page>
        <ScrollTrack>
          <svg width="12" height="10"><path d="M6 0 12 10H0z" fill="#9f9f9f" /></svg>
          <ScrollThumb />
          <svg width="12" height="10"><path d="M0 0h12L6 10z" fill="#9f9f9f" /></svg>
        </ScrollTrack>
      </Viewport>

      <Taskbar>
        <Weather>
          <WeatherIcon />
          <span>
            <Temperature>26°C</Temperature>
            Berawan
          </span>
        </Weather>
        <AppRow>
          <AppButton aria-label="Start"><StartIcon /></AppButton>
          <SearchBox>
            <Search size={19} strokeWidth={2.2} />
            <input type="text" placeholder="Search" aria-label="Search" />
            <IslandIcon />
          </SearchBox>
          {apps.map((app) => (
            <AppButton key={app.name} aria-label={app.name} $running={app.running} $active={app.active}>
              {app.icon}
            </AppButton>
          ))}
        </AppRow>
        <Tray>
          <TrayButton $gap={21} aria-label="Show hidden icons"><ChevronUp size={20} /></TrayButton>
          <TrayButton $gap={22} aria-label="OneDrive"><CloudInfoIcon /></TrayButton>
          <TrayButton $gap={22}>ENG<br />US</TrayButton>
          <TrayButton $gap={10} aria-label="Network"><WifiIcon /></TrayButton>
          <TrayButton $gap={10} aria-label="Volume"><SpeakerIcon /></TrayButton>
          <TrayButton $gap={20} aria-label="Battery"><BatteryIcon /></TrayButton>
          <Clock>00:09<br />10/10/2025</Clock>
        </Tray>
      </Taskbar>
    </Window>
  );
}
